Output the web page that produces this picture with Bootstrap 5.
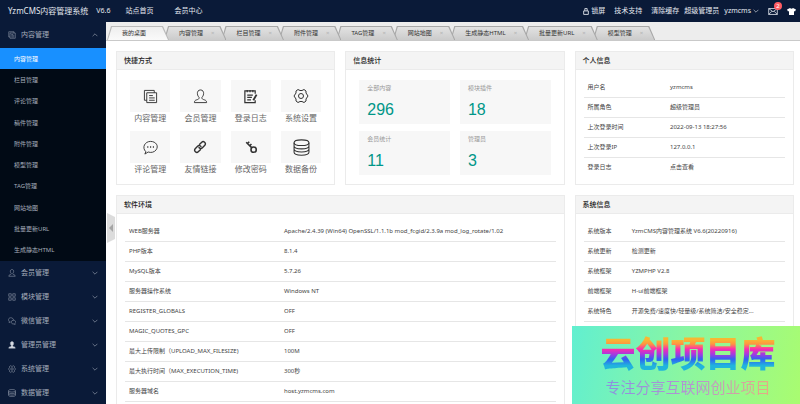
<!DOCTYPE html>
<html lang="zh-CN">
<head>
<meta charset="utf-8">
<meta name="viewport" content="width=device-width, initial-scale=1">
<title>YzmCMS内容管理系统</title>
<link href="https://cdn.jsdelivr.net/npm/bootstrap@5.3.0/dist/css/bootstrap.min.css" rel="stylesheet">
<style>
body{font-family:"Noto Sans","Noto Sans CJK SC",sans-serif;font-size:6px;line-height:12px;color:#444}
a{color:inherit;text-decoration:none}
svg{fill:none;stroke:currentColor;display:block;flex:none}
.topbar{height:22px;background:#0a1a38;color:#e4e8ef;font-size:7px}
.brand-name{font-size:8px}
.version{margin-left:8px}
.top-left{gap:21px;margin-left:15px}
.top-right{gap:9px}
.account{gap:5px}
.user-menu{gap:2px}
.mail-count{position:absolute;top:-6px;right:-4px;width:8px;height:8px;font-size:6px;line-height:8px;background:#ff5c62;color:#fff;text-align:center}
.sidebar{width:106px;background:#0a1a38;color:#a5adba}
.group-btn{height:24px;padding:0 8px;font-size:7px;line-height:12px;color:inherit;background:none;border:0;gap:5px}
.group-btn.opened{height:26px}
.submenu{height:213px;background:#010a15}
.submenu a{padding-left:14px;color:#a5adba}
.submenu a.current{background:#1890ff;color:#fff}
.tabs{height:19px;background:#ededed;border-bottom:1px solid #c9c9c9;padding:4px 0 0 1px}
.tab-item{position:relative;height:14px;margin-right:-5px;padding:0 12px 0 15px;border:0;color:#333;font-size:6px;line-height:14px;background:#a8a8a8;clip-path:polygon(4px 0,calc(100% - 6px) 0,100% 100%,0 100%);white-space:nowrap}
.tab-item::before{content:"";position:absolute;inset:1px 1px 0 1px;background:linear-gradient(#e2e2e2,#cbcbcb);clip-path:polygon(4px 0,calc(100% - 6px) 0,100% 100%,0 100%)}
.tab-item:nth-child(1){z-index:9}
.tab-item:nth-child(2){z-index:8}
.tab-item:nth-child(3){z-index:7}
.tab-item:nth-child(4){z-index:6}
.tab-item:nth-child(5){z-index:5}
.tab-item:nth-child(6){z-index:4}
.tab-item:nth-child(7){z-index:3}
.tab-item:nth-child(8){z-index:2}
.tab-item>span{position:relative}
.tab-item .cross{color:#b2b2b2;margin-left:8px}
.tab-item.current{padding-right:23px;background:#bbb}
.tab-item.current::before{background:linear-gradient(#eee,#fafafa)}
.content{--bs-gutter-x:10px;--bs-gutter-y:10px;margin:0 -5px}
.workspace{padding:10px 6px 0 10px}
.panel{height:100%;border:1px solid #ebebeb;background:#fff}
.panel h2{height:18px;margin:0;padding:0 7px;font-size:7px;line-height:18px;font-weight:500;background:#f4f4f4;border-bottom:1px solid #ebebeb;color:#222}
.shortcuts{padding:10px 13px 9px;display:grid;grid-template-columns:repeat(4,1fr);gap:7px 10px}
.shortcuts a{font-size:8px;color:#666;text-align:center}
.tile{height:32px;background:#f7f7f7;color:#333}
.stats{padding:10px 13px 9px;display:grid;grid-template-columns:1fr 1fr;gap:7px 10px}
.stat{height:44px;padding:2px 8px;background:#f7f7f7;color:#999}
.stat strong{display:block;font:400 16px/32px "Liberation Sans",sans-serif;color:#009688}
.info{padding:7px 8px}
.info table{width:100%;table-layout:fixed}
.info tr{height:20px;border-bottom:1px solid #e6e6e6}
.info.last-open tr:last-child{border:0}
.info th,.info td{font-weight:400;padding:0 4px;white-space:nowrap}
.w-soft{width:36%}.w-user{width:41%}.w-sys{width:22%}
.handle{position:absolute;left:1px;top:191px;width:8px;height:30px;padding:0;border:0;background:#dcdcdc;clip-path:polygon(0 0,100% 4px,100% 26px,0 100%)}
.promo{position:absolute;right:0;bottom:0;width:228px;height:78px;padding:6px 0 0 4px;z-index:10;background:linear-gradient(100deg,#61efd0,#8bf6a0 50%,#a9fc70)}
.promo-title{width:max-content;margin:0 auto;font:900 35px/40px "Noto Sans CJK SC",sans-serif;background:linear-gradient(#f7b733 20%,#ff9640 30%,#f92bb2 43%,#a23be0 56%,#2f62f3 68%,#20b5dc 84%);-webkit-background-clip:text;background-clip:text;color:transparent}
.promo-sub{width:max-content;margin:4px auto 0;font:400 15px/22px "Noto Sans CJK SC",sans-serif;background:linear-gradient(90deg,#8b8fe0,#b795cf 55%,#e5ad82);-webkit-background-clip:text;background-clip:text;color:transparent}
</style>
</head>
<body>
<svg class="d-none">
  <symbol id="copy" viewBox="0 0 16 16"><path d="M4 12H1.500V1.500H12V4M4 4h10.500v10.500H4zM6.500 7h4M6.500 9.500h6M6.500 12h6"/></symbol>
  <symbol id="user" viewBox="0 0 16 16"><path d="M8 1C5.500 1 4.500 3 4.700 5c.1 2 1 3 1.800 4 0 2-1 2-3 2.700-1.500.5-2 1.300-2 2.800h13c0-1.500-.5-2.300-2-2.800-2-.7-3-.7-3-2.700.8-1 1.700-2 1.800-4C11.500 3 10.500 1 8 1z"/></symbol>
  <symbol id="note" viewBox="0 0 16 16"><path d="M13 5V2H2v12.500h11V12M4.500 1v2.500M7.500 1v2.500M10.500 1v2.500M4.500 6.500h6M4.500 9h5M4.500 11.500h4" stroke-width="1.300"/><path d="M14.500 6l-3.500 6" stroke-width="2"/></symbol>
  <symbol id="gear" viewBox="0 0 16 16"><path d="M5 1.500l2 1h2l2-1 2 1.500v2l2 3-2 3v2l-2 1.500-2-1H7l-2 1L3 13v-2L1 8l2-3V3z"/><circle cx="8" cy="8" r="2.500"/></symbol>
  <symbol id="talk" viewBox="0 0 16 16"><path d="M3 12.500C-1.500 8 2 1.500 8 1.500s9 5 6 9c-2 2.700-5.500 3.300-8.500 2.300L2 15z"/><path d="M4.500 7.500h1.200M7.500 7.500h1.200M10.500 7.500h1.200" stroke-width="1.500"/></symbol>
  <symbol id="chain" viewBox="0 0 16 16"><g stroke-width="1.600"><path d="M7 5.500l3-3c2-2 5.500 1 3.500 3.500l-3 3C9 10.300 7 9.500 6.700 8"/><path d="M9 10.500l-3 3C4 15.500.5 12.500 2.500 10l3-3C7 5.700 9 6.500 9.300 8"/></g></symbol>
  <symbol id="key" viewBox="0 0 16 16"><g stroke-width="1.800"><circle cx="11" cy="11" r="3"/><path d="M9 9L2.500 2.500M4 4l2-2M6.500 6.500l2-2"/></g></symbol>
  <symbol id="data" viewBox="0 0 16 16"><ellipse cx="8" cy="3.500" rx="7" ry="2.700"/><path d="M1 3.500v9c0 3.700 14 3.700 14 0v-9M1 6.500c0 3.700 14 3.700 14 0M1 9.500c0 3.700 14 3.700 14 0"/></symbol>
  <symbol id="blocks" viewBox="0 0 16 16"><path d="M1.500 1.500h5v5h-5zM9.500 1.500h5v5h-5zM1.500 9.500h5v5h-5zM9.500 9.500h5v5h-5z"/></symbol>
  <symbol id="wechat" viewBox="0 0 16 16"><path d="M5 10l-3 1 .5-2.500C-1 5 2 1.500 5.500 1.500S11 4 11 6M10 6.500c6-.5 7 5 4 6.500l.3 2-2.300-1c-7 .5-7-7-2-7.500z"/></symbol>
  <symbol id="down" viewBox="0 0 10 6"><path d="M1 1l4 4 4-4"/></symbol>
  <symbol id="up" viewBox="0 0 10 6"><path d="M1 5l4-4 4 4"/></symbol>
</svg>
<div class="d-flex flex-column vh-100 overflow-hidden position-relative">
  <header class="topbar d-flex align-items-center flex-shrink-0 ps-2 pe-1">
    <a href="#" class="brand-name">YzmCMS内容管理系统</a><span class="version">V6.6</span>
    <nav class="top-left d-flex"><a href="#">站点首页</a><a href="#">会员中心</a></nav>
    <div class="top-right d-flex align-items-center ms-auto">
      <a href="#" class="user-menu d-flex align-items-center"><svg width="6" height="7" viewBox="0 0 10 12"><path d="M1 5h8v6H1zM3 5V1h4v4" stroke-width="1.500"/></svg>锁屏</a>
      <a href="#">技术支持</a>
      <div class="account d-flex"><a href="#">清除缓存</a><span>超级管理员</span>
      <a href="#" class="user-menu d-flex align-items-center">yzmcms<svg width="6" height="4"><use href="#down"/></svg></a></div>
      <a href="#" class="position-relative" aria-label="消息"><svg width="10" height="7" viewBox="0 0 18 13"><path d="M1 1h16v11H1zM1 1l8 6 8-6M1 12l6-6M17 12l-6-6" stroke-width="1.500"/></svg><span class="mail-count rounded-circle">2</span></a>
      <a href="#" aria-label="换肤"><svg width="9" height="7" viewBox="0 0 18 14"><path d="M6 0q3 3 6 0l6 3-2 4-2-1v8H4V6L2 7 0 3z" fill="#fff" stroke="none"/></svg></a>
    </div>
  </header>
  <div class="d-flex flex-grow-1 overflow-hidden">
    <aside class="sidebar flex-shrink-0">
      <button class="group-btn opened d-flex align-items-center w-100"><svg width="8" height="8"><use href="#copy"/></svg>内容管理<svg class="ms-auto" width="6" height="4"><use href="#up"/></svg></button>
      <nav class="submenu d-flex flex-column">
        <a href="#" class="current d-flex align-items-center flex-fill">内容管理</a>
        <a href="#" class="d-flex align-items-center flex-fill">栏目管理</a>
        <a href="#" class="d-flex align-items-center flex-fill">评论管理</a>
        <a href="#" class="d-flex align-items-center flex-fill">稿件管理</a>
        <a href="#" class="d-flex align-items-center flex-fill">附件管理</a>
        <a href="#" class="d-flex align-items-center flex-fill">模型管理</a>
        <a href="#" class="d-flex align-items-center flex-fill">TAG管理</a>
        <a href="#" class="d-flex align-items-center flex-fill">网站地图</a>
        <a href="#" class="d-flex align-items-center flex-fill">批量更新URL</a>
        <a href="#" class="d-flex align-items-center flex-fill">生成静态HTML</a>
      </nav>
      <button class="group-btn d-flex align-items-center w-100"><svg width="8" height="8"><use href="#user"/></svg>会员管理<svg class="ms-auto" width="6" height="4"><use href="#down"/></svg></button>
      <button class="group-btn d-flex align-items-center w-100"><svg width="8" height="8"><use href="#blocks"/></svg>模块管理<svg class="ms-auto" width="6" height="4"><use href="#down"/></svg></button>
      <button class="group-btn d-flex align-items-center w-100"><svg width="8" height="8"><use href="#wechat"/></svg>微信管理<svg class="ms-auto" width="6" height="4"><use href="#down"/></svg></button>
      <button class="group-btn d-flex align-items-center w-100"><svg width="8" height="8"><use href="#user" fill="#d5dae2"/></svg>管理员管理<svg class="ms-auto" width="6" height="4"><use href="#down"/></svg></button>
      <button class="group-btn d-flex align-items-center w-100"><svg width="8" height="8"><use href="#gear"/></svg>系统管理<svg class="ms-auto" width="6" height="4"><use href="#down"/></svg></button>
      <button class="group-btn d-flex align-items-center w-100"><svg width="8" height="8"><use href="#data"/></svg>数据管理<svg class="ms-auto" width="6" height="4"><use href="#down"/></svg></button>
    </aside>
    <main class="flex-grow-1 position-relative overflow-hidden">
      <div class="tabs d-flex">
        <button class="tab-item current"><span>我的桌面</span></button>
        <button class="tab-item"><span>内容管理</span><span class="cross">×</span></button>
        <button class="tab-item"><span>栏目管理</span><span class="cross">×</span></button>
        <button class="tab-item"><span>附件管理</span><span class="cross">×</span></button>
        <button class="tab-item"><span>TAG管理</span><span class="cross">×</span></button>
        <button class="tab-item"><span>网站地图</span><span class="cross">×</span></button>
        <button class="tab-item"><span>生成静态HTML</span><span class="cross">×</span></button>
        <button class="tab-item"><span>批量更新URL</span><span class="cross">×</span></button>
        <button class="tab-item"><span>模型管理</span><span class="cross">×</span></button>
      </div>
      <button class="handle" aria-label="收起菜单"><svg width="8" height="10" viewBox="0 0 8 10"><path d="M6 1v8L2 5z" fill="#a5a5a5" stroke="none"/></svg></button>
      <div class="workspace">
        <div class="row content">
          <div class="col-4 mt-0"><section class="panel"><h2>快捷方式</h2>
            <div class="shortcuts">
              <a href="#"><div class="tile d-flex align-items-center justify-content-center"><svg width="15" height="15"><use href="#copy"/></svg></div>内容管理</a>
              <a href="#"><div class="tile d-flex align-items-center justify-content-center"><svg width="15" height="15"><use href="#user"/></svg></div>会员管理</a>
              <a href="#"><div class="tile d-flex align-items-center justify-content-center"><svg width="15" height="15"><use href="#note"/></svg></div>登录日志</a>
              <a href="#"><div class="tile d-flex align-items-center justify-content-center"><svg width="16" height="16"><use href="#gear"/></svg></div>系统设置</a>
              <a href="#"><div class="tile d-flex align-items-center justify-content-center"><svg width="15" height="15"><use href="#talk"/></svg></div>评论管理</a>
              <a href="#"><div class="tile d-flex align-items-center justify-content-center"><svg width="14" height="14"><use href="#chain"/></svg></div>友情链接</a>
              <a href="#"><div class="tile d-flex align-items-center justify-content-center"><svg width="14" height="14"><use href="#key"/></svg></div>修改密码</a>
              <a href="#"><div class="tile d-flex align-items-center justify-content-center"><svg width="17" height="17"><use href="#data"/></svg></div>数据备份</a>
            </div></section></div>
          <div class="col-4 mt-0"><section class="panel"><h2>信息统计</h2>
            <div class="stats">
              <div class="stat">全部内容<strong>296</strong></div>
              <div class="stat">模块插件<strong>18</strong></div>
              <div class="stat">会员统计<strong>11</strong></div>
              <div class="stat">管理员<strong>3</strong></div>
            </div></section></div>
          <div class="col-4 mt-0"><section class="panel"><h2>个人信息</h2>
            <div class="info last-open"><table>
              <tr><th class="w-user">用户名</th><td>yzmcms</td></tr>
              <tr><th>所属角色</th><td>超级管理员</td></tr>
              <tr><th>上次登录时间</th><td>2022-09-13 18:27:56</td></tr>
              <tr><th>上次登录IP</th><td>127.0.0.1</td></tr>
              <tr><th>登录日志</th><td><a href="#">点击查看</a></td></tr>
            </table></div></section></div>
          <div class="col-8"><section class="panel"><h2>软件环境</h2>
            <div class="info"><table>
              <tr><th class="w-soft">WEB服务器</th><td>Apache/2.4.39 (Win64) OpenSSL/1.1.1b mod_fcgid/2.3.9a mod_log_rotate/1.02</td></tr>
              <tr><th>PHP版本</th><td>8.1.4</td></tr>
              <tr><th>MySQL版本</th><td>5.7.26</td></tr>
              <tr><th>服务器操作系统</th><td>Windows NT</td></tr>
              <tr><th>REGISTER_GLOBALS</th><td>OFF</td></tr>
              <tr><th>MAGIC_QUOTES_GPC</th><td>OFF</td></tr>
              <tr><th>最大上传限制（UPLOAD_MAX_FILESIZE)</th><td>100M</td></tr>
              <tr><th>最大执行时间（MAX_EXECUTION_TIME)</th><td>300秒</td></tr>
              <tr><th>服务器域名</th><td>host.yzmcms.com</td></tr>
            </table></div></section></div>
          <div class="col-4"><section class="panel"><h2>系统信息</h2>
            <div class="info"><table>
              <tr><th class="w-sys">系统版本</th><td>YzmCMS内容管理系统 V6.6(20220916)</td></tr>
              <tr><th>系统更新</th><td><a href="#">检测更新</a></td></tr>
              <tr><th>系统框架</th><td>YZMPHP V2.8</td></tr>
              <tr><th>前端框架</th><td>H-ui前端框架</td></tr>
              <tr><th>系统特色</th><td>开源免费/速度快/轻量级/系统简洁/安全稳定...</td></tr>
            </table></div></section></div>
        </div>
      </div>
    </main>
  </div>
  <aside class="promo"><div class="promo-title">云创项目库</div><div class="promo-sub">专注分享互联网创业项目</div></aside>
</div>
<script src="https://cdn.jsdelivr.net/npm/bootstrap@5.3.0/dist/js/bootstrap.bundle.min.js"></script>
</body>
</html>
